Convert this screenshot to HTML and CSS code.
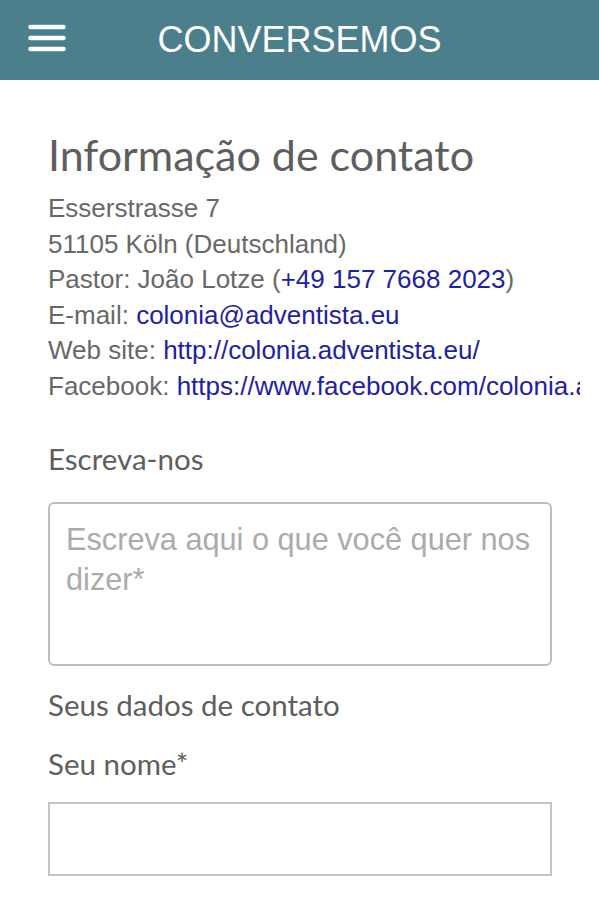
FILE: index.html
```html
<!DOCTYPE html>
<html lang="pt">
<head>
<meta charset="utf-8">
<title>Conversemos</title>
<link rel="stylesheet" href="styles.css">
</head>
<body>
<header class="topbar">
  <button class="menu-btn" aria-label="Menu">
    <svg width="38" height="28" viewBox="0 0 38 28">
      <g stroke="#fff" stroke-width="4.5" stroke-linecap="round">
        <line x1="2.5" y1="3" x2="35.5" y2="3"/>
        <line x1="2.5" y1="14" x2="35.5" y2="14"/>
        <line x1="2.5" y1="25" x2="35.5" y2="25"/>
      </g>
    </svg>
  </button>
  <h1 class="topbar-title">CONVERSEMOS</h1>
  <span class="topbar-spacer"></span>
</header>
<main class="page">
  <h2 class="title">Informação de contato</h2>
  <div class="contact">
    <div class="line">Esserstrasse 7</div>
    <div class="line">51105 Köln (Deutschland)</div>
    <div class="line">Pastor: João Lotze (<a href="#">+49 157 7668 2023</a>)</div>
    <div class="line">E-mail: <a href="#">colonia@adventista.eu</a></div>
    <div class="line">Web site: <a href="#">http://colonia.adventista.eu/</a></div>
    <div class="line">Facebook: <a href="#">https://www.facebook.com/colonia.adventista</a></div>
  </div>
  <h3 class="label label-write">Escreva-nos</h3>
  <textarea class="message" placeholder="Escreva aqui o que você quer nos dizer*"></textarea>
  <h3 class="label label-data">Seus dados de contato</h3>
  <h3 class="label label-name">Seu nome*</h3>
  <input class="field" type="text">
  <h3 class="label label-next">Seu endereço eletrônico*</h3>
</main>
</body>
</html>
```
FILE: styles.css
```css
html, body {
  margin: 0;
  padding: 0;
  background: #fff;
}
body {
  width: 599px;
  height: 900px;
  overflow: hidden;
  font-family: "Liberation Sans", Arial, sans-serif;
}
.topbar {
  height: 80px;
  background: #4b7f8b;
  display: grid;
  grid-template-columns: 1fr auto 1fr;
  align-items: center;
}
.menu-btn {
  justify-self: start;
  margin: -4px 0 0 28px;
  padding: 0;
  border: 0;
  background: none;
  width: 38px;
  height: 28px;
  display: block;
}
.menu-btn svg { display: block; }
.topbar-title {
  margin: 0;
  font-family: "Liberation Sans", Arial, sans-serif;
  font-weight: 400;
  font-size: 36px;
  line-height: 40px;
  color: #fff;
}
.page {
  padding: 0 47px 0 48px;
}
.title {
  margin: 49px 0 0;
  font-family: Lato, "Open Sans", sans-serif;
  font-weight: 400;
  font-size: 43px;
  line-height: 51px;
  color: #5e5e5e;
  white-space: nowrap;
}
.contact {
  margin: 11px -28px 0 0;
  overflow: hidden;
  white-space: nowrap;
  font-size: 26px;
  line-height: 35.5px;
  color: #686868;
}
.contact a {
  color: #1f22a0;
  text-decoration: none;
}
.label {
  margin: 0;
  font-family: Lato, "Open Sans", sans-serif;
  font-weight: 400;
  font-size: 29.5px;
  line-height: 36px;
  color: #5e5e5e;
  white-space: nowrap;
}
.label-write { margin-top: 37px; }
.label-data { margin-top: 21px; }
.label-name { margin-top: 23px; }
.label-next { margin-top: 21px; }
.message {
  display: block;
  box-sizing: border-box;
  width: 504px;
  height: 164px;
  margin: 25px 0 0;
  padding: 16px 10px 0 16px;
  border: 2px solid #bdbdbd;
  border-radius: 6px;
  resize: none;
  font-family: "Liberation Sans", Arial, sans-serif;
  font-size: 30.7px;
  line-height: 40px;
  color: #444;
  background: #fff;
}
.message::placeholder {
  color: #ababab;
  opacity: 1;
}
.field {
  display: block;
  box-sizing: border-box;
  width: 504px;
  height: 74px;
  margin: 20px 0 0;
  padding: 0 14px;
  border: 2px solid #c4c4c4;
  border-radius: 0;
  font-family: "Liberation Sans", Arial, sans-serif;
  font-size: 26px;
  background: #fff;
}
```
